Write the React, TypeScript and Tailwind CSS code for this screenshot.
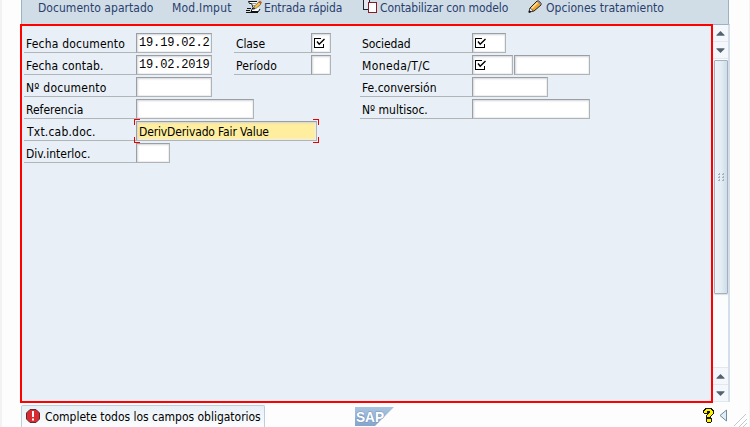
import type { ReactNode } from 'react';

function Txt({ children, className = '' }: { children: ReactNode; className?: string }) {
  return <span className={`block text-[12px] leading-[15px] whitespace-pre ${className}`}>{children}</span>;
}

function Required() {
  return (
    <svg width="12" height="12" viewBox="0 0 12 12" className="mt-[3px] shrink-0" fill="none" stroke="#000" shapeRendering="crispEdges">
      <path d="M7 1.500H.5v9h9V7" />
      <path d="M3 4.500l2.200 2.700L10.500 2" strokeWidth="1.400" shapeRendering="auto" />
    </svg>
  );
}

function Field({ w, children, className = 'bg-white' }: { w: string; children?: ReactNode; className?: string }) {
  return (
    <div className={`flex h-5 shrink-0 overflow-hidden border border-[#999fa5] border-r-[#b0b4b7] border-b-[#b0b4b7] pl-[2px] shadow-[inset_1px_1px_2px_#d3d6d9,inset_-1px_-1px_1px_#eef0f1] ${w} ${className}`}>
      {children}
    </div>
  );
}

function Row({ label, labelW, spacing = '', children }: { label: string; labelW: string; spacing?: string; children: ReactNode }) {
  return (
    <div className="flex h-5">
      <div className={`h-5 shrink-0 border-b border-[#b0b5b8] pt-1 pl-[2px] ${labelW}`}>
        <Txt className={spacing}>{label}</Txt>
      </div>
      {children}
    </div>
  );
}

function Mono({ children }: { children: string }) {
  return <span className="pt-px font-['Liberation_Mono',monospace] text-[12px] leading-[17px] tracking-[-0.15px] whitespace-pre">{children}</span>;
}

function Arrow({ down = false }: { down?: boolean }) {
  return (
    <div className="flex h-[17px] w-[15px] shrink-0 items-center justify-center border-b border-[#e2e8ef] bg-[#f4f7fb] pr-px">
      <svg width="9" height="5" viewBox="0 0 9 5" className={down ? 'rotate-180' : ''}>
        <path d="M4.500 0L8.500 4v.8H.5V4z" fill="#51636f" />
      </svg>
    </div>
  );
}

function QuickEntryIcon() {
  return (
    <svg width="17" height="15" viewBox="0 0 17 15" fill="none">
      <path d="M2.500 1.500h9L10 4l3 4.500-1 3H5l2-3z" fill="#fff" />
      <path d="M11 1.500H2.500l1 2h2L7 7.500l-2 4h7.500L14 9" stroke="#111" />
      <path d="M1 8.500h4M0 10.500h4M0 12.500h12" stroke="#111" />
      <path d="M6 3.500h4M7 5.500h2" stroke="#999" />
      <path d="M7.500 9l1-3 4.500-4 2 2-4.500 4z" fill="#f9c24a" stroke="#4e402d" strokeWidth=".6" />
      <path d="M12.500 2L14 .5l2 2L14.800 4z" fill="#c4571f" />
      <path d="M7 9.500l.7-2L9.200 9z" fill="#111" />
    </svg>
  );
}

function CopyIcon() {
  return (
    <svg width="15" height="14" viewBox="0 0 15 14" shapeRendering="crispEdges">
      <path d="M.5 0v9.500h6V0" fill="#e4e8ee" stroke="#1c2434" />
      <path d="M5.500 2.500h8v10h-8z" fill="#fff" stroke="#861c28" />
    </svg>
  );
}

function PencilIcon() {
  return (
    <svg width="14" height="14" viewBox="0 0 14 14">
      <path d="M1 12l1-4 7-7h2l2 2v2l-7 6z" fill="#f2a52e" stroke="#222" />
      <path d="M3 8l6-6 1 1-6 6z" fill="#ffe49e" />
      <path d="M9 1.500L12.500 5l.5-2-2-2z" fill="#8d8394" />
      <path d="M1 12l1-4 1.500 1L5 11z" fill="#fff" stroke="#222" strokeWidth=".6" />
      <path d="M.5 13l1-3L3.500 12z" fill="#111" />
    </svg>
  );
}

function ErrorIcon() {
  return (
    <svg width="14" height="14" viewBox="0 0 14 14">
      <path d="M4 .5h6L13.500 4v6L10 13.500H4L.5 10V4z" fill="#d92b31" stroke="#5e2931" />
      <path d="M6 2h2v6H6zM6 9.500h2v2H6z" fill="#fff" />
    </svg>
  );
}

function SapLogo() {
  return (
    <svg width="39" height="19" viewBox="0 0 39 19">
      <defs>
        <linearGradient id="logo" x1="0" y1="0" x2="0" y2="1">
          <stop stopColor="#a9c4e0" />
          <stop offset="1" stopColor="#84a5cc" />
        </linearGradient>
      </defs>
      <path d="M0 0h39L20 19H0z" fill="url(#logo)" />
      <text x="1" y="14.500" fontFamily="Liberation Sans" fontSize="15" fontWeight="bold" fill="#fff" stroke="#7898bd" strokeWidth="1.200" paintOrder="stroke" textLength="28" lengthAdjust="spacingAndGlyphs">SAP</text>
    </svg>
  );
}

function Toolbar() {
  return (
    <div className="flex h-6 w-[708px] border-r border-l border-[#9eb1c0] bg-[#d0dde7] pt-px text-[#29406d]">
      <div className="w-[150px] pl-4"><Txt className="tracking-[0.04px]">Documento apartado</Txt></div>
      <div className="w-[74px]"><Txt className="tracking-[0.2px]">Mod.Imput</Txt></div>
      <div className="flex w-[117px] gap-px"><div className="-mt-px"><QuickEntryIcon /></div><Txt className="tracking-[-0.15px]">Entrada rápida</Txt></div>
      <div className="flex w-[165px] gap-[2px]"><div className="-mt-px"><CopyIcon /></div><Txt className="tracking-[-0.12px]">Contabilizar con modelo</Txt></div>
      <div className="flex gap-1"><div className="-mt-px"><PencilIcon /></div><Txt className="tracking-[0.03px]">Opciones tratamiento</Txt></div>
    </div>
  );
}

function Scrollbar() {
  return (
    <div className="flex h-[378px] w-[17px] flex-col border-t border-r-2 border-t-[#9eb1c0] border-r-[#d4dfe9] bg-[#fbfcfd]">
      <Arrow />
      <Arrow down />
      <div className="mt-px ml-px flex h-[234px] w-[14px] items-center justify-center rounded-[1px] border border-[#a2b1be] bg-linear-to-r from-[#edf3f8] via-[#e4edf4] to-[#cedde9] shadow-[0_1px_1px_#d8dee3]">
        <svg width="7" height="8" viewBox="0 0 7 8" fill="#a3b1bf" shapeRendering="crispEdges">
          <path d="M0 1h1V0h1v2H0zM4 1h1V0h1v2H4zM0 4h1V3h1v2H0zM4 4h1V3h1v2H4zM0 7h1V6h1v2H0zM4 7h1V6h1v2H4z" />
        </svg>
      </div>
      <div className="mt-auto border-t border-[#e2e8ef]"><Arrow /><Arrow down /></div>
    </div>
  );
}

export default function App() {
  return (
    <div className="h-[427px] w-[750px] overflow-hidden border-r border-l-2 border-[#f2f2f2] bg-[#fdfdfd] pl-[18px] font-['DejaVu_Sans_Condensed','DejaVu_Sans',sans-serif] text-black">
      <div className="ml-px"><Toolbar /></div>
      <div className="flex">
        <div className="flex h-[379px] w-[693px] border-2 border-[#f00] bg-[#e8eff6] pt-[7px] pl-[2px]">
          <div className="flex w-[210px] flex-col gap-[2px]">
            <Row label="Fecha documento" labelW="w-[112px]" spacing="tracking-[0.2px]"><Field w="w-[76px]"><Mono>19.19.02.2</Mono></Field></Row>
            <Row label="Fecha contab." labelW="w-[112px]" spacing="tracking-[0.15px]"><Field w="w-[76px]"><Mono>19.02.2019</Mono></Field></Row>
            <Row label="Nº documento" labelW="w-[112px]" spacing="tracking-[0.25px]"><Field w="w-[76px]" /></Row>
            <Row label="Referencia" labelW="w-[112px]"><Field w="w-[118px]" /></Row>
            <Row label="Txt.cab.doc." labelW="w-[112px]" spacing="pl-px tracking-[0.2px]">
              <div className="relative">
                <Field w="w-[181px]" className="bg-[#ffee9e]"><Txt className="pt-[3px] tracking-[-0.14px]">DerivDerivado Fair Value</Txt></Field>
                <svg width="185" height="24" viewBox="0 0 185 24" className="absolute -top-[2px] -left-[2px]" fill="none" stroke="#e60000" shapeRendering="crispEdges">
                  <path d="M.5 6V.5H6M179 .5h5.500V6M.5 18v5.500H6M179 23.500h5.500V18" />
                </svg>
              </div>
            </Row>
            <Row label="Div.interloc." labelW="w-[112px]"><Field w="w-[34px]" /></Row>
          </div>
          <div className="flex w-[126px] flex-col gap-[2px]">
            <Row label="Clase" labelW="w-[77px]" spacing="tracking-[-0.1px]"><Field w="w-[20px]"><Required /></Field></Row>
            <Row label="Período" labelW="w-[77px]" spacing="tracking-[0.1px]"><Field w="w-[20px]" /></Row>
          </div>
          <div className="flex flex-col gap-[2px]">
            <Row label="Sociedad" labelW="w-[112px]" spacing="tracking-[-0.1px]"><Field w="w-[34px]"><Required /></Field></Row>
            <Row label="Moneda/T/C" labelW="w-[112px]" spacing="tracking-[0.4px]">
              <div className="flex gap-px"><Field w="w-[41px]"><Required /></Field><Field w="w-[76px]" /></div>
            </Row>
            <Row label="Fe.conversión" labelW="w-[112px]"><Field w="w-[76px]" /></Row>
            <Row label="Nº multisoc." labelW="w-[112px]"><Field w="w-[118px]" /></Row>
          </div>
        </div>
        <Scrollbar />
      </div>
      <div className="flex h-6 pt-[2px]">
        <div className="ml-px flex h-[23px] w-[244px] gap-[5px] rounded-t-[2px] border border-b-0 border-[#bdcedd] bg-linear-to-b from-[#e8f0f6] to-[#fcfdfe] pt-[3px] pl-1">
          <ErrorIcon /><Txt className="pt-px tracking-[-0.02px]">Complete todos los campos obligatorios</Txt>
        </div>
        <div className="mt-[2px] ml-[90px]"><SapLogo /></div>
        <svg width="12" height="16" viewBox="0 0 12 16" className="mt-[3px] ml-[309px]" shapeRendering="crispEdges">
          <path d="M2 0h7v1h1v1h1v4h-1v1H9v1H8v2h1v4H8v1H4v-1H3V7h1V6H1V5H0V2h1V1h1z" fill="#161600" />
          <path d="M3 1h5v1h1v1h1v3H9v1H8v1H7v1H4V7h1V6h1V5h1V3H4v2H1V3h1V2h1zM4 11h4v3H4z" fill="#fff200" />
        </svg>
        <svg width="10" height="14" viewBox="0 0 10 14" className="mt-[4px] ml-[4px]" fill="#e0edf5" stroke="#738c9e">
          <path d="M7.500 1v11L1 6.500z" />
        </svg>
        <svg width="13" height="13" viewBox="0 0 13 13" className="mt-[9px] ml-[5px]" stroke="#c3c8cc" fill="none">
          <path d="M0 12L12 0M5 13l8-8M9 13l4-4" />
        </svg>
      </div>
    </div>
  );
}
